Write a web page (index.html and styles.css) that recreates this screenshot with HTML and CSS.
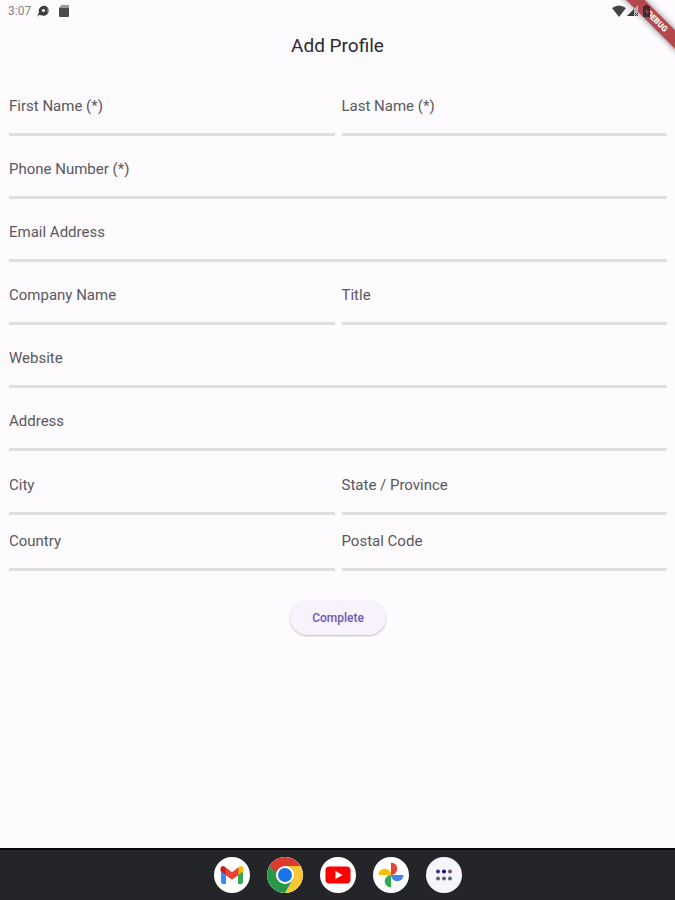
FILE: index.html
```html
<!DOCTYPE html>
<html lang="en">
<head>
<meta charset="utf-8">
<meta name="viewport" content="width=device-width, initial-scale=1">
<title>Add Profile</title>
<link rel="stylesheet" href="styles.css">
</head>
<body>
<div class="ribbon-clip"><span class="ribbon">DEBUG</span></div>
<div class="status-bar">
  <div class="status-group">
    <span class="clock">3:07</span>
    <svg class="status-icon debug-icon" viewBox="0 0 14 14" aria-hidden="true"><path d="M1 13 3 8A5 5 0 1 1 6.500 11.500L3 11Z" fill="#3f3f42"/><circle cx="7.500" cy="6.500" r="1.600" fill="#f5f3f6"/><path d="m11.500 4 2 2.500-2 2.500z" fill="#aaa8ac"/></svg>
    <svg class="status-icon" viewBox="0 0 14 14" aria-hidden="true"><path d="M5 1h6a1 1 0 0 1 1 1v10a1 1 0 0 1-1 1H3a1 1 0 0 1-1-1V4z" fill="#4b4b4e"/><path d="M5 1h6a1 1 0 0 1 1 1v2H2z" fill="#99989c"/></svg>
  </div>
  <div class="status-group status-right">
    <svg class="status-icon" viewBox="0 0 14 14" aria-hidden="true"><path d="M0 4Q7-1 14 4L7 13Z" fill="#454548"/></svg>
    <svg class="status-icon signal" viewBox="0 0 14 14" aria-hidden="true"><path d="M1 12 12 1V12Z" fill="#b5b3b6"/><path d="M1 12 8 5V12Z" fill="#3b3b3e"/><path d="m9 9 3 3M12 9l-3 3" stroke="#444" stroke-width="1"/></svg>
    <svg class="status-icon" viewBox="0 0 14 14" aria-hidden="true"><path d="M5 1h3v1h2v11H3V2h2z" fill="#42292d"/><path d="m7 4-2 4h2v3l2-4H7z" fill="#95474b"/></svg>
  </div>
</div>
<header class="app-bar"><h1>Add Profile</h1></header>
<main>
  <form>
    <div class="fields">
      <div class="field"><label for="first">First Name (*)</label><input id="first" type="text"></div>
      <div class="field"><label for="last">Last Name (*)</label><input id="last" type="text"></div>
      <div class="field wide"><label for="phone">Phone Number (*)</label><input id="phone" type="tel"></div>
      <div class="field wide"><label for="email">Email Address</label><input id="email" type="email"></div>
      <div class="field"><label for="company">Company Name</label><input id="company" type="text"></div>
      <div class="field"><label for="title">Title</label><input id="title" type="text"></div>
      <div class="field wide"><label for="website">Website</label><input id="website" type="url"></div>
      <div class="field wide"><label for="address">Address</label><input id="address" type="text"></div>
    </div>
    <div class="fields region">
      <div class="field"><label for="city">City</label><input id="city" type="text"></div>
      <div class="field"><label for="state">State / Province</label><input id="state" type="text"></div>
      <div class="field"><label for="country">Country</label><input id="country" type="text"></div>
      <div class="field"><label for="postal">Postal Code</label><input id="postal" type="text"></div>
    </div>
    <button class="complete" type="button">Complete</button>
  </form>
</main>
<nav class="dock" aria-label="Apps">
  <button class="app" type="button" aria-label="Gmail">
    <svg viewBox="0 0 36 36"><path d="M7 12v13a2 2 0 0 0 2 2h3V15z" fill="#4285f4"/><path d="M24 15v12h3a2 2 0 0 0 2-2V12z" fill="#34a853"/><path d="M24 11v7l5.500-4v-2c0-3-2.500-3.500-4-2.400z" fill="#fbbc04"/><path d="M12 11v7l-5.500-4v-2c0-3 2.500-3.500 4-2.400z" fill="#c5221f"/><path d="m11.500 10.300 6.500 5 6.500-5V18L18 22.800 11.500 18z" fill="#ea4335"/></svg>
  </button>
  <button class="app" type="button" aria-label="Chrome">
    <svg viewBox="0 0 36 36"><path d="M18 18 2.400 9A18 18 0 0 1 33.600 9z" fill="#dc3b30"/><path d="M18 9h15.600A18 18 0 0 1 18 36l7.800-13.500z" fill="#fcc934"/><path d="M2.400 9A18 18 0 0 0 18 36l7.800-13.500H10.200z" fill="#279847"/><path d="M2.400 9 10.200 22.500 18 18V9z" fill="#dc3b30"/><path d="M2.400 9 10.200 22.500 13 18z" fill="#279847"/><circle cx="18" cy="18" r="9" fill="#fff"/><circle cx="18" cy="18" r="7" fill="#1a73e8"/></svg>
  </button>
  <button class="app" type="button" aria-label="YouTube">
    <svg viewBox="0 0 36 36"><rect x="5.500" y="9.500" width="25" height="17" rx="4" fill="#f00"/><path d="m15.500 14 7 4-7 4z" fill="#fff"/></svg>
  </button>
  <button class="app" type="button" aria-label="Photos">
    <svg viewBox="0 0 36 36"><path d="M18 18V5.500a6.250 6.250 0 0 1 0 12.500z" fill="#ea4335"/><path d="M18 18h12.500a6.250 6.250 0 0 1-12.500 0z" fill="#4285f4"/><path d="M18 18v12.500a6.250 6.250 0 0 1 0-12.500z" fill="#34a853"/><path d="M18 18H5.500a6.250 6.250 0 0 1 12.500 0z" fill="#fbbc04"/></svg>
  </button>
  <button class="app all-apps" type="button" aria-label="All apps">
    <svg viewBox="0 0 36 36"><g fill="#303980"><circle cx="12" cy="14.500" r="2"/><circle cx="18" cy="14.500" r="2" fill="#10128a"/><circle cx="24" cy="14.500" r="2" fill="#78506f"/></g><g fill="#62617a"><circle cx="12" cy="21.500" r="2"/><circle cx="18" cy="21.500" r="2"/><circle cx="24" cy="21.500" r="2"/></g></svg>
  </button>
</nav>
</body>
</html>
```
FILE: styles.css
```css
* { box-sizing: border-box; }

body {
  margin: 0;
  min-height: 100vh;
  display: flex;
  flex-direction: column;
  position: relative;
  background: #fdfbfe;
  color: #2b292e;
  font-family: Roboto, "Liberation Sans", sans-serif;
}

.status-bar {
  position: relative;
  display: flex;
  justify-content: space-between;
  align-items: center;
  height: 22px;
  padding: 0 21px 0 8px;
}

.status-group { display: flex; align-items: center; gap: 7px; }
.status-right { gap: 0; }
.clock { font-size: 12px; line-height: 16px; color: #858388; }
.debug-icon { margin-left: -2px; }
.status-icon { display: block; width: 14px; height: 14px; }

.ribbon-clip {
  position: absolute;
  top: 0;
  right: 0;
  width: 64px;
  height: 64px;
  overflow: hidden;
}

.ribbon {
  position: absolute;
  top: 15px;
  right: -32px;
  width: 100px;
  transform: rotate(45deg);
  background: #b5484d;
  box-shadow: 0 0 6px rgba(0, 0, 0, 0.5);
  color: #fff;
  font-size: 8px;
  font-weight: 900;
  line-height: 13px;
  text-align: center;
}

.app-bar { padding: 10px 16px 8px; text-align: center; }
h1 { margin: 0; font-size: 19px; font-weight: 400; line-height: 28px; }

main { flex: 1; padding: 12px 8px 24px 9px; }
form { display: flex; flex-direction: column; }

.fields {
  display: grid;
  grid-template-columns: 1fr 1fr;
  gap: 7px;
}
.region { row-gap: 0; margin-top: 8px; }
.wide { grid-column: 1 / -1; }

.field { display: flex; flex-direction: column; padding-top: 16px; }
.field label { font-size: 15px; line-height: 20px; color: #5a585d; }
.field input {
  width: 100%;
  height: 20px;
  padding: 0;
  border: 0;
  border-bottom: 3px solid #e0dee1;
  background: transparent;
  font: inherit;
  font-size: 14px;
  outline: none;
}

.complete {
  align-self: center;
  height: 35px;
  margin-top: 29px;
  padding: 0 22px;
  border: 0;
  border-radius: 18px;
  background: #f7f2fb;
  box-shadow: 0 1px 2px rgba(0, 0, 0, 0.25);
  color: #6f58b4;
  font: inherit;
  font-size: 12px;
  font-weight: 500;
}

.dock {
  display: flex;
  justify-content: center;
  align-items: center;
  gap: 17px;
  height: 52px;
  border-top: 2px solid #08080a;
  background: #242529;
}

.app {
  width: 36px;
  height: 36px;
  padding: 0;
  border: 0;
  border-radius: 50%;
  background: #fff;
  overflow: hidden;
}
.app svg { display: block; width: 36px; height: 36px; }
.all-apps { background: #f6f5fc; }
```
